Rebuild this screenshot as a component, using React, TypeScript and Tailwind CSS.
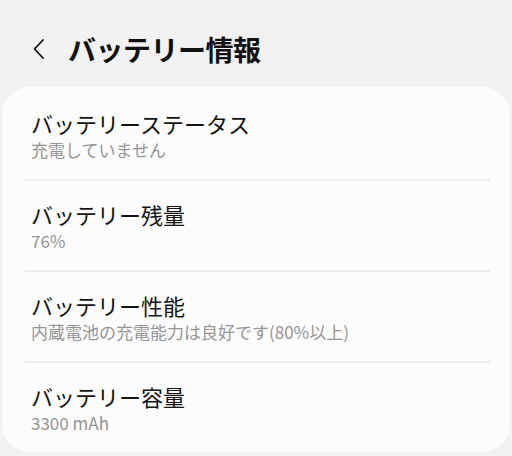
import React from 'react';

const items = [
  { title: 'バッテリーステータス', sub: '充電していません' },
  { title: 'バッテリー残量', sub: '76%' },
  { title: 'バッテリー性能', sub: '内蔵電池の充電能力は良好です(80%以上)' },
  { title: 'バッテリー容量', sub: '3300 mAh' },
];

const font = { fontFamily: '"Noto Sans CJK JP", "Noto Sans", Roboto, sans-serif' };

export default function App() {
  return (
    <div className="w-[512px] h-[456px] bg-[#f2f2f2] overflow-hidden" style={font}>
      <div className="h-[87px] flex items-center pl-[30px] pt-[11px]">
        <svg width="18" height="24" viewBox="0 0 18 24" className="mr-[20px]">
          <path d="M13 3 L4.5 12 L13 21" fill="none" stroke="#111" strokeWidth="1.8" strokeLinecap="round" strokeLinejoin="round" />
        </svg>
        <h1 className="text-[28px] font-bold text-[#111] leading-none tracking-[-0.5px]">バッテリー情報</h1>
      </div>
      <div className="mx-[2px] h-[365px] bg-[#fcfcfc] rounded-[28px] pt-[3px]">
        {items.map((it, i) => (
          <div key={i}>
            {i > 0 && <div className="ml-[23px] mr-[20px] h-[2px] bg-[#ececec]" />}
            <div className="pl-[29px] pt-[18px] pb-[18px]">
              <div className="text-[22px] leading-[30px] text-[#141414]">{it.title}</div>
              <div className="text-[17px] leading-[22px] text-[#959595] mt-[1px]">{it.sub}</div>
            </div>
          </div>
        ))}
      </div>
    </div>
  );
}
